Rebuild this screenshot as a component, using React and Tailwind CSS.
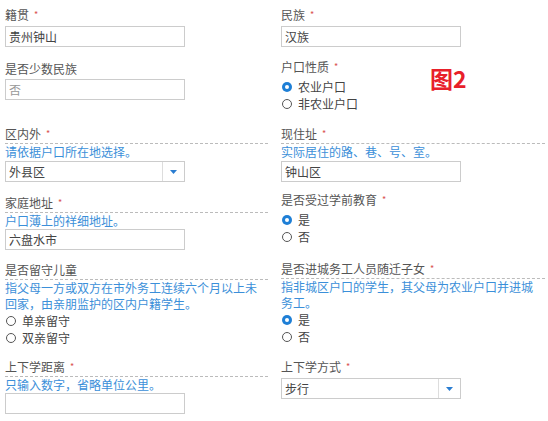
import React from 'react';

const font = { fontFamily: '"Noto Sans CJK SC", "Noto Sans", sans-serif' };

const Label = ({ text, required, hint }) => (
  <div
    className={
      'text-[12px] leading-[15px] text-[#555] ' +
      (hint ? 'pb-[2px] border-b border-dashed border-[#bbb]' : '')
    }
  >
    {text}
    {required && <span className="ml-[5px] text-[9px] align-top text-[#d9534f]">*</span>}
  </div>
);

const Hint = ({ children }) => (
  <div className="max-w-[256px] text-[12px] leading-[16px] text-[#3b8fd9]">{children}</div>
);

const Input = ({ value, muted, className = '' }) => (
  <div
    className={
      'w-[180px] h-[21px] border border-[#ccc] bg-white px-[3px] flex items-center text-[12px] ' +
      (muted ? 'text-[#999] ' : 'text-[#444] ') +
      className
    }
  >
    {value}
  </div>
);

const Select = ({ value, className = '' }) => (
  <div
    className={
      'w-[180px] h-[21px] border border-[#ccc] bg-white flex items-stretch text-[12px] text-[#444] ' +
      className
    }
  >
    <div className="flex-1 px-[3px] flex items-center">{value}</div>
    <div className="w-[22px] border-l border-[#ddd] flex items-center justify-center">
      <svg width="7" height="4" viewBox="0 0 7 4">
        <path d="M0 0 L7 0 L3.5 4 Z" fill="#2a7dd1" />
      </svg>
    </div>
  </div>
);

const Radio = ({ label, checked }) => (
  <div className="h-[17px] flex items-center gap-[6px] text-[12px] text-[#444]">
    {checked ? (
      <span className="ml-[1px] w-[10px] h-[10px] rounded-full bg-[#1e7fd6] flex items-center justify-center">
        <span className="w-[4px] h-[4px] rounded-full bg-white" />
      </span>
    ) : (
      <span className="ml-[1px] w-[10px] h-[10px] rounded-full border-[1.5px] border-[#555] bg-white" />
    )}
    <span>{label}</span>
  </div>
);

export default function App() {
  return (
    <div className="relative w-[548px] h-[421px] bg-white overflow-hidden" style={font}>
      <div className="flex pl-[5px] gap-[13px]">
        {/* left column */}
        <div className="w-[263px] flex flex-col pt-[7px]">
          <Label text="籍贯" required />
          <Input value="贵州钟山" className="mt-[4px]" />

          <div className="mt-[14px]">
            <Label text="是否少数民族" />
          </div>
          <Input value="否" muted className="mt-[3px]" />

          <div className="mt-[26px]">
            <Label text="区内外" required hint />
          </div>
          <Hint>请依据户口所在地选择。</Hint>
          <Select value="外县区" className="mt-[1px]" />

          <div className="mt-[13px]">
            <Label text="家庭地址" required hint />
          </div>
          <Hint>户口薄上的祥细地址。</Hint>
          <Input value="六盘水市" />

          <div className="mt-[12px]">
            <Label text="是否留守儿童" hint />
          </div>
          <Hint>指父母一方或双方在市外务工连续六个月以上未回家，由亲朋监护的区内户籍学生。</Hint>
          <Radio label="单亲留守" />
          <Radio label="双亲留守" />

          <div className="mt-[13px]">
            <Label text="上下学距离" required hint />
          </div>
          <Hint>只输入数字，省略单位公里。</Hint>
          <Input value="" />
        </div>

        {/* right column */}
        <div className="w-[264px] flex flex-col pt-[7px]">
          <Label text="民族" required />
          <Input value="汉族" className="mt-[4px]" />

          <div className="mt-[12px]">
            <Label text="户口性质" required />
          </div>
          <div className="mt-[4px]">
            <Radio label="农业户口" checked />
            <Radio label="非农业户口" />
          </div>

          <div className="mt-[14px]">
            <Label text="现住址" required hint />
          </div>
          <Hint>实际居住的路、巷、号、室。</Hint>
          <Input value="钟山区" className="mt-[1px]" />

          <div className="mt-[10px]">
            <Label text="是否受过学前教育" required />
          </div>
          <div className="mt-[4px]">
            <Radio label="是" checked />
            <Radio label="否" />
          </div>

          <div className="mt-[16px]">
            <Label text="是否进城务工人员随迁子女" required hint />
          </div>
          <Hint>指非城区户口的学生，其父母为农业户口并进城务工。</Hint>
          <Radio label="是" checked />
          <Radio label="否" />

          <div className="mt-[14px]">
            <Label text="上下学方式" required />
          </div>
          <Select value="步行" className="mt-[4px]" />
        </div>
      </div>

      <div className="absolute left-[430px] top-[63px] text-[23px] leading-[30px] font-bold text-[#e8202a]">
        图2
      </div>
    </div>
  );
}
